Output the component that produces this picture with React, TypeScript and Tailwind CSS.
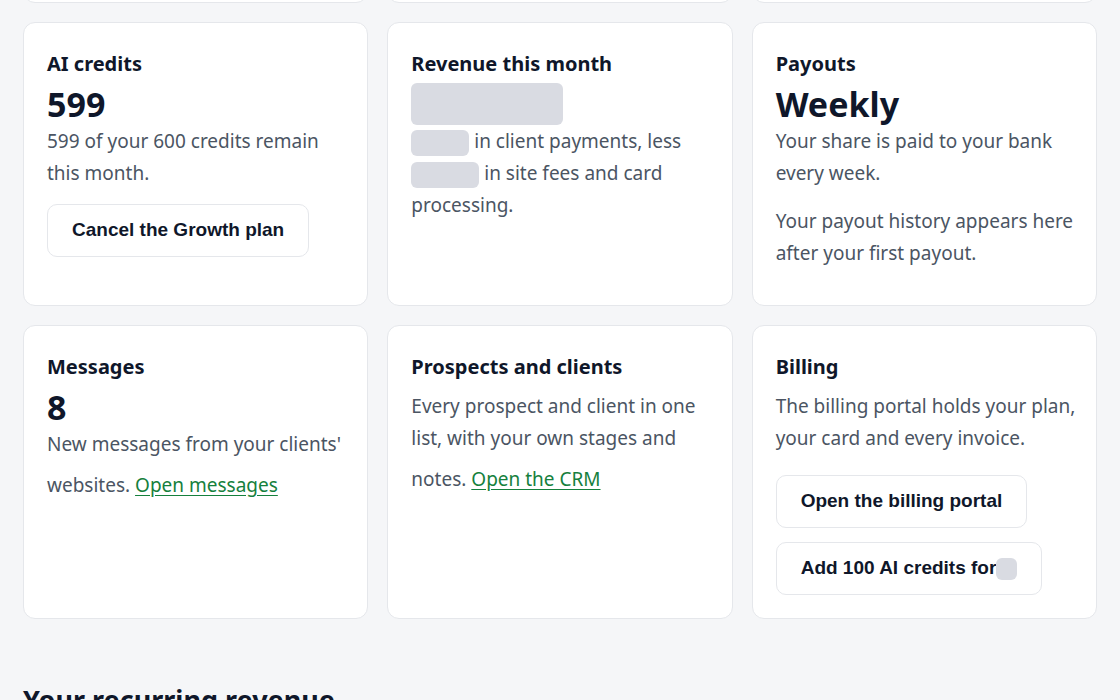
import React from "react";

const card =
  "bg-white border border-[#e5e7eb] rounded-[12px] pl-[23px] pr-[16px] pt-[25px] pb-[23px] min-h-[284px] flex flex-col items-start";
const h3 = "text-[20px] leading-[32px] font-bold text-[#0f172a] mb-[7px]";
const num = "-mt-[4px] text-[34px] leading-[42px] font-bold text-[#0f172a]";
const body = "text-[19px] leading-[32px] text-[#4b5563]";
const btn =
  "h-[53px] px-[24px] flex items-center rounded-[10px] border border-[#e5e7eb] bg-white text-[19px] font-bold text-[#0f172a] [font-family:'Liberation_Sans',Arial,sans-serif]";
const link = "inline-block pt-[9px] text-[#15803d] underline underline-offset-[3px]";
const ph = "inline-block align-middle bg-[#d9dbe2] rounded-[6px]";

export default function App() {
  return (
    <div className="min-h-screen bg-[#f5f6f8] overflow-hidden [font-family:'Noto_Sans',sans-serif]">
      <div className="px-[23px] -mt-[81px]">
        <div className="grid grid-cols-3 gap-x-[19px] gap-y-[19px]">
          <div className="bg-white border border-[#e5e7eb] rounded-[12px] h-[84px]" />
          <div className="bg-white border border-[#e5e7eb] rounded-[12px] h-[84px]" />
          <div className="bg-white border border-[#e5e7eb] rounded-[12px] h-[84px]" />

          <div className={card}>
            <h3 className={h3}>AI credits</h3>
            <div className={num}>599</div>
            <p className={body}>599 of your 600 credits remain this month.</p>
            <button className={btn + " mt-[15px]"}>Cancel the Growth plan</button>
          </div>

          <div className={card}>
            <h3 className={h3}>Revenue this month</h3>
            <div className={ph + " -mt-[4px] w-[152px] h-[42px]"} />
            <p className={body}>
              <span className={ph + " w-[58px] h-[26px]"} /> in client payments, less{" "}
              <span className={ph + " w-[68px] h-[26px]"} /> in site fees and card processing.
            </p>
          </div>

          <div className={card}>
            <h3 className={h3}>Payouts</h3>
            <div className={num}>Weekly</div>
            <p className={body}>Your share is paid to your bank every week.</p>
            <p className={body + " mt-[16px]"}>
              Your payout history appears here after your first payout.
            </p>
          </div>

          <div className={card}>
            <h3 className={h3}>Messages</h3>
            <div className={num}>8</div>
            <p className={body}>
              New messages from your clients' websites. <a className={link} href="#">Open messages</a>
            </p>
          </div>

          <div className={card}>
            <h3 className={h3}>Prospects and clients</h3>
            <p className={body}>
              Every prospect and client in one list, with your own stages and notes.{" "}
              <a className={link} href="#">Open the CRM</a>
            </p>
          </div>

          <div className={card}>
            <h3 className={h3}>Billing</h3>
            <p className={body}>The billing portal holds your plan, your card and every invoice.</p>
            <button className={btn + " mt-[21px]"}>Open the billing portal</button>
            <button className={btn + " mt-[14px]"}>
              Add 100 AI credits for
              <span className="inline-block w-[21px] h-[22px] rounded-[6px] bg-[#d9dbe2]" />
            </button>
          </div>
        </div>

        <h2 className="mt-[63px] text-[27px] leading-[36px] font-bold text-[#0f172a]">
          Your recurring revenue
        </h2>
      </div>
    </div>
  );
}
